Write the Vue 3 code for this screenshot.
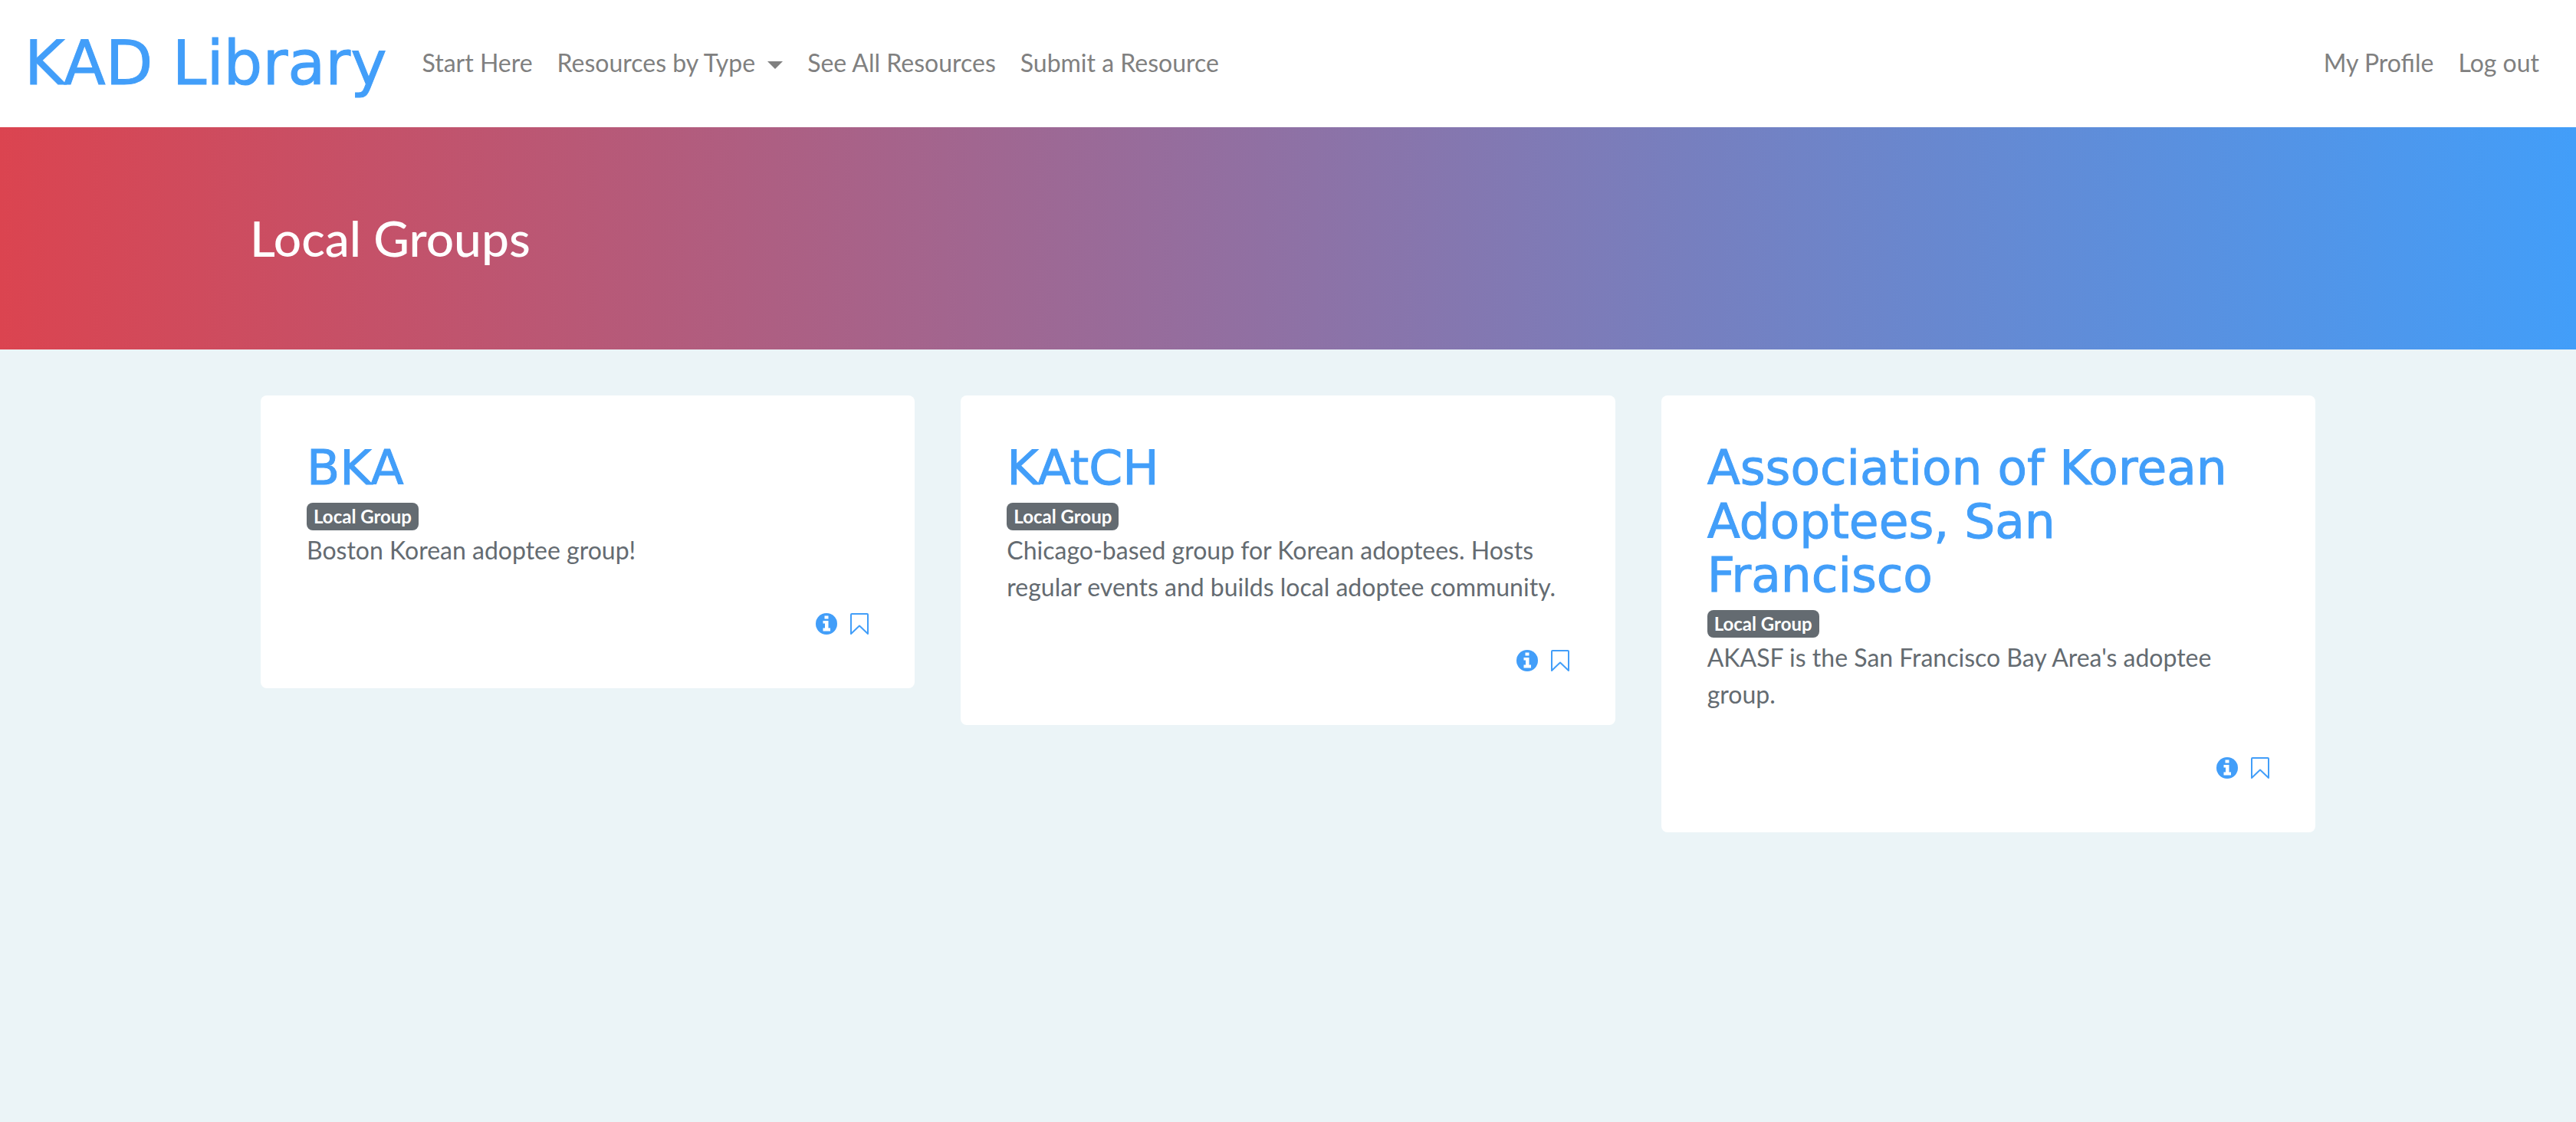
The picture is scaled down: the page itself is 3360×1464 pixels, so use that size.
<script setup>
const links = [
  { text: 'Start Here' },
  { text: 'Resources by Type', menu: true },
  { text: 'See All Resources' },
  { text: 'Submit a Resource' },
]

const account = ['My Profile', 'Log out']

const groups = [
  { name: 'BKA', about: 'Boston Korean adoptee group!' },
  {
    name: 'KAtCH',
    about: 'Chicago-based group for Korean adoptees. Hosts regular events and builds local adoptee community.',
  },
  {
    name: 'Association of Korean Adoptees, San Francisco',
    about: "AKASF is the San Francisco Bay Area's adoptee group.",
  },
]
</script>

<template>
  <div class="page">
    <header class="navbar">
      <a class="brand" href="#">KAD Library</a>
      <nav class="links">
        <template v-for="link in links" :key="link.text">
          <button v-if="link.menu" class="link" type="button" aria-haspopup="true">
            {{ link.text }}<span class="caret"></span>
          </button>
          <a v-else class="link" href="#">{{ link.text }}</a>
        </template>
      </nav>
      <nav class="links account">
        <a v-for="text in account" :key="text" class="link" href="#">{{ text }}</a>
      </nav>
    </header>

    <section class="hero">
      <h1>Local Groups</h1>
    </section>

    <main class="cards">
      <article v-for="group in groups" :key="group.name" class="card">
        <h2><a href="#">{{ group.name }}</a></h2>
        <div class="tags"><span class="badge">Local Group</span></div>
        <p>{{ group.about }}</p>
        <div class="actions">
          <a href="#" aria-label="More information">
            <svg width="28" height="28" viewBox="0 0 28 28">
              <circle cx="14" cy="14" r="14" fill="currentColor" />
              <path d="M11.5 3.5h5v4h-5zM9.5 10h7v9.500h2.500v4H9.500v-4H12v-6H9.500z" fill="#fff" />
            </svg>
          </a>
          <button type="button" aria-label="Bookmark">
            <svg width="24" height="28" viewBox="0 0 24 28">
              <path
                d="M2 1h20q1 0 1 1v25L12 16.500 1 27V2q0-1 1-1z"
                fill="none"
                stroke="currentColor"
                stroke-width="2"
                stroke-linejoin="round"
              />
            </svg>
          </button>
        </div>
      </article>
    </main>
  </div>
</template>

<style>
body {
  margin: 0;
  background: #ebf4f7;
}
</style>

<style scoped>
.page {
  min-height: 100vh;
  background: #ebf4f7;
  color: #646b71;
  font-family: Lato, "Liberation Sans", sans-serif;
  font-size: 32px;
  line-height: 48px;
}

a {
  color: inherit;
  text-decoration: none;
}

button {
  padding: 0;
  border: 0;
  background: none;
  color: inherit;
  font: inherit;
  cursor: pointer;
}

.navbar {
  display: flex;
  align-items: center;
  padding: 24px 32px;
  background: #fff;
}

.brand {
  margin-right: 30px;
  color: #429ef9;
  font-family: "DejaVu Sans", sans-serif;
  font-size: 80px;
  line-height: 118px;
  white-space: nowrap;
  -webkit-text-stroke: 1px currentColor;
}

.links {
  display: flex;
  align-items: center;
  padding-bottom: 2px;
}

.account {
  margin-left: auto;
}

.link {
  padding: 0 16px;
  color: #808080;
  white-space: nowrap;
}

.caret {
  display: inline-block;
  margin-left: 16px;
  border: 10px solid transparent;
  border-top-color: currentColor;
  border-bottom: 0;
  vertical-align: 4px;
}

.hero {
  padding: 106px 326px;
  background: linear-gradient(to right, #db4450, #429ef9);
}

h1 {
  margin: 0;
  color: #fff;
  font-size: 64px;
  font-weight: 500;
  line-height: 78px;
}

.cards {
  display: grid;
  grid-template-columns: repeat(3, 1fr);
  align-items: start;
  gap: 60px;
  padding: 60px 340px;
}

.card {
  padding: 60px;
  border-radius: 8px;
  background: #fff;
}

h2 {
  margin: 0;
  color: #429ef9;
  font-family: "DejaVu Sans", sans-serif;
  font-size: 63px;
  font-weight: 400;
  line-height: 70px;
  -webkit-text-stroke: 1px currentColor;
}

.tags {
  display: flex;
  align-items: flex-end;
  box-sizing: border-box;
  height: 48px;
  padding-bottom: 2px;
}

.badge {
  padding: 6px 9px;
  border-radius: 8px;
  background: #646b71;
  color: #fff;
  font-size: 24px;
  font-weight: 700;
  line-height: 24px;
}

p {
  margin: 0 0 48px;
}

.actions {
  display: flex;
  justify-content: flex-end;
  align-items: center;
  gap: 17px;
  height: 48px;
  color: #429ef9;
}

.actions svg {
  display: block;
}
</style>
